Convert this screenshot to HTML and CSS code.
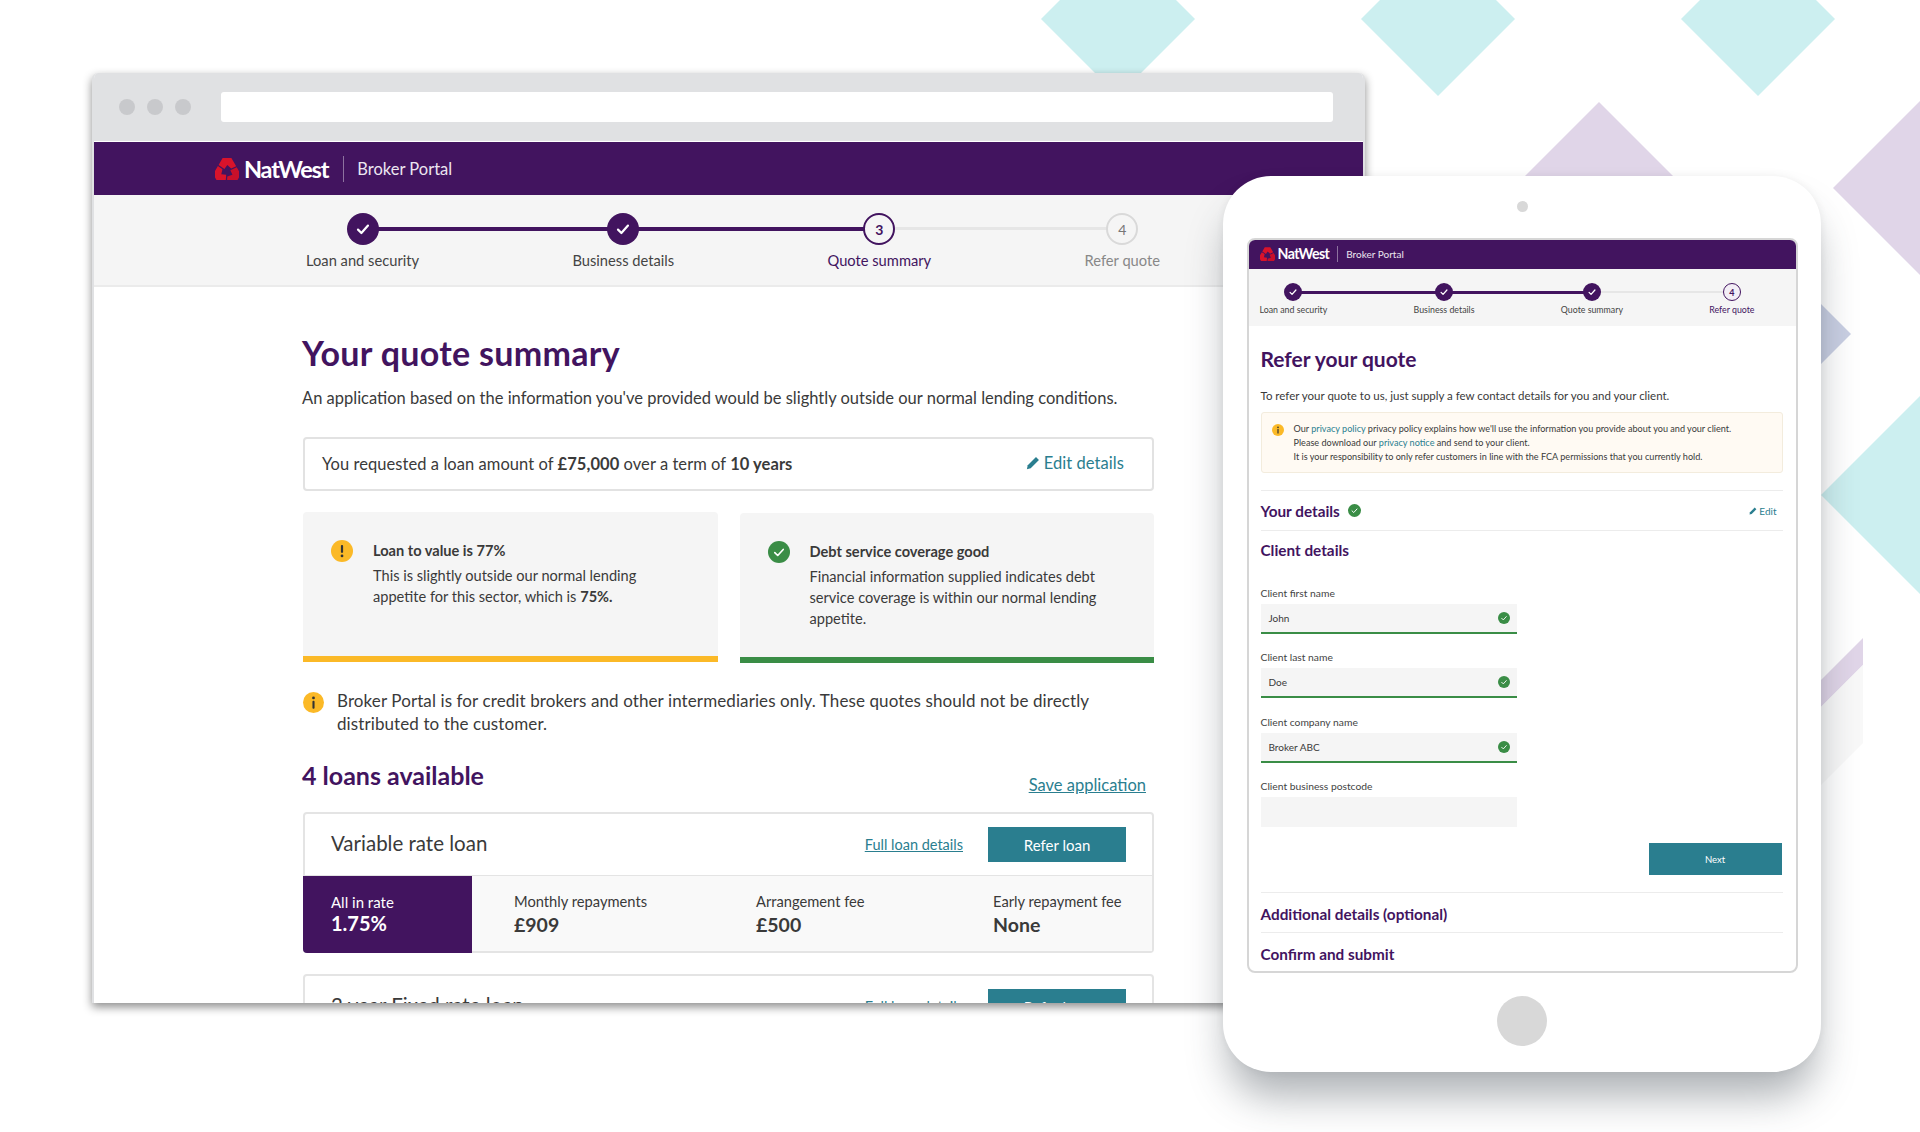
FILE: index.html
```html
<!DOCTYPE html>
<html lang="en">
  <head>
    <meta charset="UTF-8" />
    <title>NatWest Broker Portal</title>
    <link rel="stylesheet" href="styles.css">
  </head>
  <body>
    <div class="canvas">
      <svg class="backdrop" width="1920" height="1132" viewBox="0 0 1920 1132">
        <defs>
          <g id="chevron">
            <polygon points="7.6,0 16.4,0 21.2,8.2 16.2,10.6 12.3,7 9.4,11 3.6,7" />
          </g>
          <symbol id="logo" viewBox="0 0 24 22">
            <use href="#chevron" fill="#d8132b" />
            <use href="#chevron" fill="#c9102a" transform="rotate(120 12 13.4)" />
            <use href="#chevron" fill="#d8132b" transform="rotate(240 12 13.4)" />
          </symbol>
          <symbol id="tick" viewBox="0 0 24 24">
            <path d="M7 12.6l3.4 3.4L17 8.6" fill="none" stroke="#fff" stroke-width="2.2" stroke-linecap="round" stroke-linejoin="round" />
          </symbol>
          <symbol id="ok" viewBox="0 0 24 24">
            <circle cx="12" cy="12" r="12" fill="#3a8d46" />
            <path d="M7.4 12.6l3.2 3.2 6-6.6" fill="none" stroke="#fff" stroke-width="1.8" stroke-linecap="round" stroke-linejoin="round" />
          </symbol>
          <symbol id="warn" viewBox="0 0 24 24">
            <circle cx="12" cy="12" r="12" fill="#fbb927" />
            <rect x="10.8" y="5.5" width="2.4" height="8.5" rx="1" fill="#333" />
            <circle cx="12" cy="17.4" r="1.5" fill="#333" />
          </symbol>
          <symbol id="info" viewBox="0 0 24 24">
            <circle cx="12" cy="12" r="12" fill="#fbb927" />
            <circle cx="12" cy="6.8" r="1.6" fill="#333" />
            <rect x="10.8" y="10" width="2.4" height="9" rx="1" fill="#333" />
          </symbol>
          <symbol id="pencil" viewBox="0 0 16 16">
            <path d="M11.4 1.2l3.4 3.4-9.4 9.4L1 15l1-4.4z" fill="#2a7e8f" />
          </symbol>
        </defs>
        <g fill="#cceff0">
          <polygon points="1118,-58 1195,19 1118,96 1041,19" />
          <polygon points="1438,-58 1515,19 1438,96 1361,19" />
          <polygon points="1758,-58 1835,19 1758,96 1681,19" />
          <polygon points="1928,388 2035,495 1928,602 1821,495" />
        </g>
        <g fill="#e0d5e8">
          <polygon points="1599,102 1676,179 1599,256 1522,179" />
          <polygon points="1920,101 2007,188 1920,275 1833,188" />
          <polygon points="1821,680 1863,638 1863,665 1821,707" />
        </g>
        <polygon points="1774,257 1851,334 1774,411 1697,334" fill="#c9cfe3" />
        <polygon points="1821,707 1863,665 1863,743 1821,785" fill="#f8f8f8" />
      </svg>

      <div class="browser">
        <div class="chrome">
          <span class="dot"></span>
          <span class="dot"></span>
          <span class="dot"></span>
          <div class="address"></div>
        </div>
        <header class="brand">
          <svg class="brand-logo"><use href="#logo" /></svg>
          <span class="brand-name">NatWest</span>
          <span class="brand-sep"></span>
          <span class="brand-portal">Broker Portal</span>
        </header>
        <div class="stepper">
          <div class="steps">
            <div class="step">
              <span class="circle done"><svg><use href="#tick" /></svg></span>
              <span class="step-label">Loan and security</span>
            </div>
            <div class="step">
              <span class="circle done"><svg><use href="#tick" /></svg></span>
              <span class="step-label">Business details</span>
            </div>
            <div class="step current">
              <span class="circle">3</span>
              <span class="step-label">Quote summary</span>
            </div>
            <div class="step todo">
              <span class="circle">4</span>
              <span class="step-label">Refer quote</span>
            </div>
          </div>
        </div>
        <main class="summary">
          <h1>Your quote summary</h1>
          <p class="lead">An application based on the information you've provided would be slightly outside our normal lending conditions.</p>
          <div class="request">
            <span>You requested a loan amount of <b>£75,000</b> over a term of <b>10 years</b></span>
            <a class="edit" href="#"><svg><use href="#pencil" /></svg>Edit details</a>
          </div>
          <div class="checks">
            <div class="check amber">
              <svg class="check-icon"><use href="#warn" /></svg>
              <div>
                <h4>Loan to value is 77%</h4>
                <p>This is slightly outside our normal lending appetite for this sector, which is <b>75%.</b></p>
              </div>
            </div>
            <div class="check green">
              <svg class="check-icon"><use href="#ok" /></svg>
              <div>
                <h4>Debt service coverage good</h4>
                <p>Financial information supplied indicates debt service coverage is within our normal lending appetite.</p>
              </div>
            </div>
          </div>
          <div class="note">
            <svg class="note-icon"><use href="#info" /></svg>
            <p>Broker Portal is for credit brokers and other intermediaries only. These quotes should not be directly distributed to the customer.</p>
          </div>
          <div class="loans-head">
            <h2>4 loans available</h2>
            <a href="#">Save application</a>
          </div>
          <section class="loan">
            <div class="loan-top">
              <h3>Variable rate loan</h3>
              <a href="#">Full loan details</a>
              <button>Refer loan</button>
            </div>
            <div class="loan-figures">
              <div class="rate">
                <span>All in rate</span>
                <b>1.75%</b>
              </div>
              <div class="figures">
                <div class="figure"><span>Monthly repayments</span><b>£909</b></div>
                <div class="figure"><span>Arrangement fee</span><b>£500</b></div>
                <div class="figure"><span>Early repayment fee</span><b>None</b></div>
              </div>
            </div>
          </section>
          <section class="loan">
            <div class="loan-top">
              <h3>2 year Fixed rate loan</h3>
              <a href="#">Full loan details</a>
              <button>Refer loan</button>
            </div>
          </section>
        </main>
      </div>

      <div class="tablet">
        <span class="camera"></span>
        <div class="screen">
          <header class="brand small">
            <svg class="brand-logo"><use href="#logo" /></svg>
            <span class="brand-name">NatWest</span>
            <span class="brand-sep"></span>
            <span class="brand-portal">Broker Portal</span>
          </header>
          <div class="stepper small">
            <div class="steps">
              <div class="step">
                <span class="circle done"><svg><use href="#tick" /></svg></span>
                <span class="step-label">Loan and security</span>
              </div>
              <div class="step">
                <span class="circle done"><svg><use href="#tick" /></svg></span>
                <span class="step-label">Business details</span>
              </div>
              <div class="step">
                <span class="circle done"><svg><use href="#tick" /></svg></span>
                <span class="step-label">Quote summary</span>
              </div>
              <div class="step current">
                <span class="circle">4</span>
                <span class="step-label">Refer quote</span>
              </div>
            </div>
          </div>
          <div class="refer">
            <h2>Refer your quote</h2>
            <p class="refer-lead">To refer your quote to us, just supply a few contact details for you and your client.</p>
            <div class="notice">
              <svg><use href="#info" /></svg>
              <div>
                <p>Our <a href="#">privacy policy</a> privacy policy explains how we'll use the information you provide about you and your client.</p>
                <p>Please download our <a href="#">privacy notice</a> and send to your client.</p>
                <p>It is your responsibility to only refer customers in line with the FCA permissions that you currently hold.</p>
              </div>
            </div>
            <div class="your-details">
              <h3>Your details</h3>
              <svg><use href="#ok" /></svg>
              <a href="#"><svg><use href="#pencil" /></svg>Edit</a>
            </div>
            <h3 class="client-title">Client details</h3>
            <label class="field-label">Client first name</label>
            <div class="field valid">John<svg><use href="#ok" /></svg></div>
            <label class="field-label">Client last name</label>
            <div class="field valid">Doe<svg><use href="#ok" /></svg></div>
            <label class="field-label">Client company name</label>
            <div class="field valid">Broker ABC<svg><use href="#ok" /></svg></div>
            <label class="field-label">Client business postcode</label>
            <div class="field"></div>
            <div class="next-row"><button>Next</button></div>
            <h3 class="fold">Additional details (optional)</h3>
            <h3 class="fold">Confirm and submit</h3>
          </div>
        </div>
        <span class="home"></span>
      </div>
    </div>
  </body>
</html>
```

FILE: styles.css
```css
* {
  margin: 0;
  padding: 0;
  box-sizing: border-box;
}
body {
  font-family: Lato, "Noto Sans", sans-serif;
  background: #fff;
  color: #3a3a3a;
}
a {
  color: #2a7e8f;
}
button {
  font-family: inherit;
  border: none;
  color: #fff;
  background-color: #2a7e8f;
}
.canvas {
  position: relative;
  width: 1920px;
  height: 1132px;
  overflow: hidden;
  background: #fff;
}
.backdrop {
  position: absolute;
  top: 0;
  left: 0;
}

/* desktop window */
.browser {
  position: absolute;
  left: 92px;
  top: 73px;
  width: 1273px;
  height: 930px;
  display: flex;
  flex-direction: column;
  overflow: hidden;
  background: #fff;
  border: 2px solid #e0e1e3;
  border-width: 0 2px;
  border-radius: 6px 6px 0 0;
  box-shadow: 0 4px 10px rgba(0, 0, 0, 0.45);
}
.chrome {
  flex: none;
  height: 68px;
  display: flex;
  align-items: center;
  gap: 12px;
  padding-left: 25px;
  background: #e0e1e3;
}
.dot {
  width: 16px;
  height: 16px;
  border-radius: 50%;
  background: #c8c9cc;
}
.address {
  width: 1112px;
  height: 30px;
  margin-left: 18px;
  background: #fff;
  border-radius: 3px;
}
.brand {
  flex: none;
  height: 54px;
  display: flex;
  align-items: center;
  padding-left: 121px;
  border-top: 1px solid #fff;
  background: #42145f;
  color: #fff;
}
.brand-logo {
  width: 24px;
  height: 22px;
  margin-right: 5px;
}
.brand-name {
  font-size: 23.5px;
  font-weight: 700;
  letter-spacing: -1.2px;
}
.brand-sep {
  width: 1px;
  height: 26px;
  margin: 0 13px 0 15px;
  background: rgba(255, 255, 255, 0.4);
}
.brand-portal {
  font-size: 16.5px;
  color: #ece6f0;
}
.stepper {
  flex: none;
  padding: 18px 0 15px 212px;
  background: #f5f5f5;
  border-bottom: 2px solid #ebebeb;
}
.steps {
  width: 854px;
  display: flex;
  justify-content: space-between;
  background-image: linear-gradient(#42145f, #42145f), linear-gradient(#e6e6e6, #e6e6e6);
  background-repeat: no-repeat;
  background-size: 515px 4px, 243px 3px;
  background-position: 58px 14px, 573px 14px;
}
.step {
  display: flex;
  flex-direction: column;
  align-items: center;
  gap: 5px;
}
.circle {
  width: 32px;
  height: 32px;
  display: flex;
  align-items: center;
  justify-content: center;
  border-radius: 50%;
  font-size: 14px;
  font-weight: 700;
  background: #f5f5f5;
}
.circle svg {
  width: 24px;
  height: 24px;
}
.circle.done {
  background: #42145f;
}
.step-label {
  font-size: 14.7px;
  line-height: 20px;
  color: #444;
  white-space: nowrap;
}
.current .circle {
  border: 2px solid #42145f;
  color: #42145f;
}
.current .step-label {
  color: #42145f;
}
.todo .circle {
  border: 2px solid #d9d9d9;
  color: #777;
  font-weight: 400;
}
.todo .step-label {
  color: #888;
}

/* quote summary */
.summary {
  padding: 46px 0 0 208px;
  width: 1060px;
}
h1 {
  font-size: 34px;
  line-height: 40px;
  font-weight: 700;
  letter-spacing: 0.3px;
  color: #42145f;
}
.lead {
  margin-top: 13px;
  font-size: 16.5px;
  line-height: 24px;
}
.request {
  height: 54px;
  margin: 27px 0 21px 1px;
  padding: 0 28px 0 17px;
  display: flex;
  align-items: center;
  justify-content: space-between;
  font-size: 16.5px;
  letter-spacing: 0.06px;
  border: 2px solid #e2e2e2;
  border-radius: 4px;
}
.request b,
.check b {
  font-weight: 700;
}
.edit {
  display: flex;
  align-items: center;
  gap: 4px;
  margin-top: -3px;
  text-decoration: none;
  font-size: 16.5px;
}
.edit svg {
  width: 14px;
  height: 14px;
}
.checks {
  display: flex;
  gap: 22px;
  margin-left: 1px;
}
.check {
  flex: 1;
  height: 150px;
  display: flex;
  gap: 20px;
  padding: 28px 40px 0 28px;
  background: #f5f5f5;
  border-radius: 4px 4px 0 0;
  font-size: 14.6px;
  line-height: 21px;
}
.check h4 {
  margin-bottom: 4px;
  font-size: 14.6px;
  font-weight: 700;
}
.amber {
  border-bottom: 6px solid #fbb927;
}
.green {
  border-bottom: 6px solid #3a8d46;
  margin-top: 1px;
}
.check-icon {
  flex: none;
  width: 22px;
  height: 22px;
}
.note {
  display: flex;
  gap: 13px;
  margin: 26px 0 0 1px;
  font-size: 17px;
  letter-spacing: 0.1px;
  line-height: 23px;
}
.note-icon {
  flex: none;
  width: 21px;
  height: 21px;
  margin-top: 3px;
}
.loans-head {
  display: flex;
  justify-content: space-between;
  align-items: flex-end;
  margin-top: 25px;
  padding-right: 8px;
}
.loans-head h2 {
  font-size: 25px;
  line-height: 30px;
  margin-bottom: 7px;
  font-weight: 700;
  color: #42145f;
}
.loans-head a {
  font-size: 16.5px;
  line-height: 24px;
}
.loan {
  margin: 15px 0 21px 1px;
  border: 2px solid #e4e4e4;
  border-radius: 4px;
}
.loan + .loan {
  margin-top: 0;
}
.loan-top {
  height: 61px;
  display: flex;
  align-items: center;
  padding: 0 26px;
}
.loan-top h3 {
  flex: 1;
  padding-bottom: 3px;
  font-size: 20.5px;
  font-weight: 400;
}
.loan-top a {
  font-size: 14.5px;
  margin-right: 25px;
}
.loan-top button {
  width: 138px;
  height: 35px;
  font-size: 15px;
}
.loan-figures {
  display: flex;
  height: 76px;
  background: #f9f9f9;
  border-top: 1px solid #e4e4e4;
}
.rate {
  width: 169px;
  display: flex;
  flex-direction: column;
  margin: 0 0 -2px -2px;
  padding: 17px 0 0 28px;
  background: #42145f;
  color: #fff;
  font-size: 15px;
  border-radius: 0 0 0 4px;
}
.rate b {
  font-size: 20px;
  font-weight: 700;
  line-height: 25px;
}
.figures {
  display: grid;
  grid-template-columns: 242px 237px auto;
  padding: 15px 0 0 42px;
}
.figure {
  display: flex;
  flex-direction: column;
  font-size: 14.7px;
  line-height: 20px;
}
.figure b {
  margin-top: 1px;
  font-size: 19.5px;
  font-weight: 700;
  line-height: 26px;
}

/* tablet */
.tablet {
  position: absolute;
  left: 1223px;
  top: 176px;
  width: 598px;
  height: 896px;
  display: flex;
  flex-direction: column;
  align-items: center;
  background: #fff;
  border-radius: 48px;
  box-shadow: 0 30px 40px -6px rgba(50, 60, 70, 0.4), 0 0 8px rgba(0, 0, 0, 0.06);
}
.camera {
  flex: none;
  width: 11px;
  height: 11px;
  margin-top: 25px;
  border-radius: 50%;
  background: #d8d8d8;
}
.screen {
  flex: none;
  width: 551px;
  height: 735px;
  margin-top: 26px;
  display: flex;
  flex-direction: column;
  overflow: hidden;
  border: 2px solid #d6d6d6;
  border-radius: 8px;
}
.home {
  flex: none;
  width: 50px;
  height: 50px;
  margin-top: 23px;
  border-radius: 50%;
  background: #d8d8d8;
}
.brand.small {
  height: 29px;
  padding: 0 0 2px 11px;
  border-top: 0;
}
.small .brand-logo {
  width: 15px;
  height: 14px;
  margin-right: 3px;
}
.small .brand-name {
  font-size: 14.2px;
  letter-spacing: -0.6px;
}
.small .brand-sep {
  height: 16px;
  margin: 0 8px;
}
.small .brand-portal {
  font-size: 10px;
}
.stepper.small {
  padding: 14px 0 10px 11px;
  height: 57px;
  border-bottom: 0;
}
.small .steps {
  width: 495px;
  background-size: 299px 3px, 140px 2px;
  background-position: 34px 8px, 333px 8px;
}
.small .step {
  gap: 3px;
}
.small .circle {
  width: 18px;
  height: 18px;
  font-size: 9px;
}
.small .circle svg {
  width: 14px;
  height: 14px;
}
.small .step-label {
  font-size: 8.8px;
  line-height: 12px;
}
.small .current .circle {
  border-width: 1px;
  background: #f3eef6;
}
.refer {
  padding: 20px 13px 0 12px;
}
.refer h2 {
  font-size: 21px;
  line-height: 26px;
  font-weight: 700;
  color: #42145f;
}
.refer-lead {
  margin-top: 16px;
  font-size: 11.5px;
  line-height: 16px;
}
.notice {
  height: 61px;
  margin: 8px 0 17px;
  padding: 9px 14px 0 10px;
  display: flex;
  gap: 10px;
  background: #fffaf3;
  border: 1px solid #f3ecdd;
  border-radius: 3px;
  font-size: 9.1px;
  line-height: 14px;
}
.notice svg {
  flex: none;
  width: 12px;
  height: 12px;
  margin-top: 2px;
}
.notice a {
  text-decoration: none;
}
.your-details {
  height: 41px;
  display: flex;
  align-items: center;
  gap: 8px;
  border-top: 1px solid #ececec;
  border-bottom: 1px solid #ececec;
}
.your-details > svg {
  width: 13px;
  height: 13px;
}
.your-details a {
  margin-left: auto;
  margin-right: 6px;
  display: flex;
  align-items: center;
  gap: 2px;
  font-size: 10px;
  text-decoration: none;
}
.your-details a svg {
  width: 8px;
  height: 8px;
}
.refer h3 {
  font-size: 15.3px;
  font-weight: 700;
  color: #42145f;
}
.refer h3.client-title {
  margin: 9px 0 26px;
  line-height: 20px;
}
.field-label {
  display: block;
  margin-bottom: 4px;
  font-size: 10.3px;
  line-height: 14px;
  color: #444;
}
.field {
  width: 256px;
  height: 30px;
  display: flex;
  align-items: center;
  justify-content: space-between;
  margin-bottom: 16.3px;
  padding: 0 7px 0 8px;
  background: #f5f5f5;
  font-size: 10px;
}
.field.valid {
  border-bottom: 2px solid #3a8d46;
}
.field svg {
  width: 12px;
  height: 12px;
}
.next-row {
  display: flex;
  justify-content: flex-end;
  padding-right: 1px;
}
.next-row button {
  width: 133px;
  height: 32px;
  font-size: 9.5px;
}
.refer h3.fold {
  height: 40px;
  padding-top: 12px;
  line-height: 18px;
}
.next-row + .fold {
  margin-top: 17px;
  border-top: 1px solid #ececec;
}
.fold + .fold {
  border-top: 1px solid #ececec;
}
```
